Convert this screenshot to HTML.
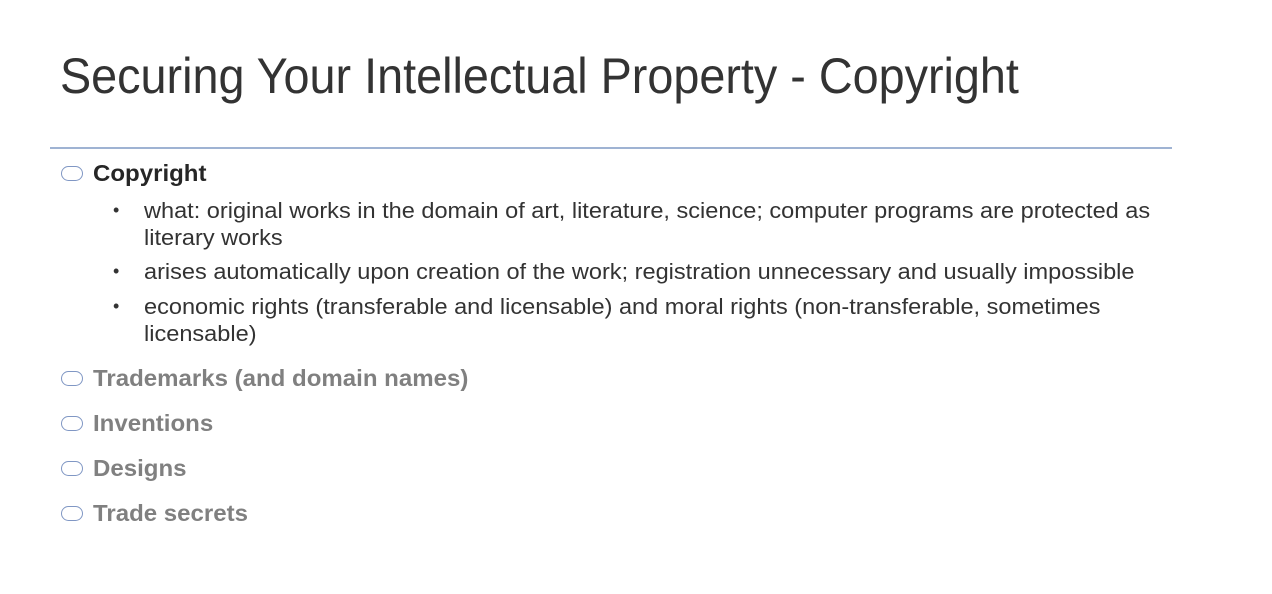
<!DOCTYPE html>
<html><head><style>
body{margin:0;width:1272px;height:594px;background:#fff;overflow:hidden;font-family:"Liberation Sans",sans-serif;color:#404040;position:relative}
.t{position:absolute;left:60px;top:47px;font-size:50px;white-space:nowrap;transform:scaleX(0.935);transform-origin:left top;color:#333}
.line{position:absolute;left:50px;top:147px;width:1122px;height:2px;background:#9fb3d3}
.h{position:absolute;left:93px;font-size:23px;font-weight:bold;white-space:nowrap;transform:scaleX(1.045);transform-origin:left top}
.o{position:absolute;left:61px;width:20px;height:13px;border:1.6px solid #8097c4;border-radius:8px;background:#fff}
.b{position:absolute;left:144px;font-size:22px;line-height:27px;white-space:nowrap;color:#333;transform:scaleX(1.07);transform-origin:left top}
.d{position:absolute;left:113px;font-size:18px;color:#333}
.g{color:#808080}
</style></head><body>
<div class="t">Securing Your Intellectual Property - Copyright</div>
<div class="line"></div>
<div class="o" style="top:166px"></div><div class="h" style="top:160px;color:#262626">Copyright</div>
<div class="d" style="top:200px">•</div><div class="b" style="top:197px">what: original works in the domain of art, literature, science; computer programs are protected as<br>literary works</div>
<div class="d" style="top:261px">•</div><div class="b" style="top:258px">arises automatically upon creation of the work; registration unnecessary and usually impossible</div>
<div class="d" style="top:296px">•</div><div class="b" style="top:293px">economic rights (transferable and licensable) and moral rights (non-transferable, sometimes<br>licensable)</div>
<div class="o" style="top:371px"></div><div class="h g" style="top:365px">Trademarks (and domain names)</div>
<div class="o" style="top:416px"></div><div class="h g" style="top:410px">Inventions</div>
<div class="o" style="top:461px"></div><div class="h g" style="top:455px">Designs</div>
<div class="o" style="top:506px"></div><div class="h g" style="top:500px">Trade secrets</div>
</body></html>
